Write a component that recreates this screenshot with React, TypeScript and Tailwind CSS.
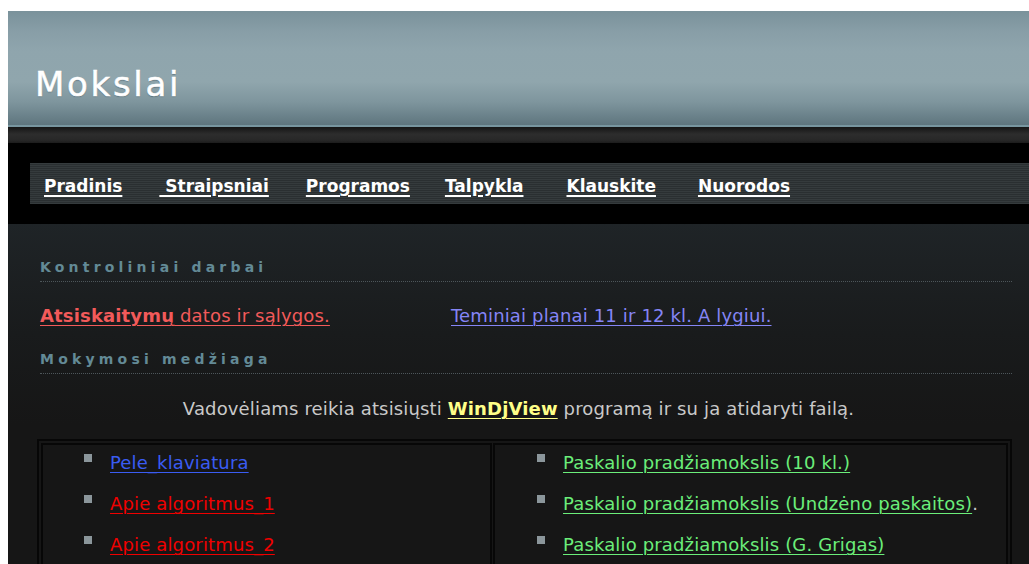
import React from "react";

const navItems = [
  { label: "Pradinis", space: "" },
  { label: " Straipsniai", space: "ml-[37px]" },
  { label: "Programos", space: "ml-[37px]" },
  { label: "Talpykla", space: "ml-[35px]" },
  { label: "Klauskite", space: "ml-[43px]" },
  { label: "Nuorodos", space: "ml-[42px]" },
];

function Bullet() {
  return <span className="mt-[2px] mr-[18px] h-[8px] w-[8px] shrink-0 bg-[#8b969b]" />;
}

function SectionTitle({ children }: { children: React.ReactNode }) {
  return (
    <h2 className="border-b border-dotted border-[#4d565a] pb-[5px] text-[14px] font-bold leading-[18px] tracking-[4.2px] text-[#638a96]">
      {children}
    </h2>
  );
}

const link = "underline decoration-1 underline-offset-[3px]";

export default function App() {
  return (
    <div
      className="min-h-screen bg-white pl-2 pt-[11px]"
      style={{ fontFamily: '"DejaVu Sans", Verdana, sans-serif' }}
    >
      {/* site banner */}
      <header className="flex h-[114px] items-end bg-[linear-gradient(to_bottom,#7a929b_0%,#889ea7_18%,#8fa5ad_35%,#90a6ad_62%,#7e959d_80%,#5e757e_100%)] pb-[20px] pl-[27px]">
        <h1 className="text-[34px] leading-[42px] tracking-[2.7px] text-white [-webkit-text-stroke:0.5px_#ffffff] [text-shadow:0_1px_1px_rgba(40,60,70,0.45)]">
          Mokslai
        </h1>
      </header>
      <div className="h-[2px] bg-[#7896a0]" />
      <div className="h-[16px] bg-[linear-gradient(to_bottom,#151515,#2d2d2d_45%,#282828_80%,#1c1c1c)]" />

      {/* navigation strip */}
      <div className="bg-black py-[20px] pl-[22px]">
        <nav className="flex h-[41px] items-center bg-[repeating-linear-gradient(to_bottom,#353b3d_0px,#353b3d_1px,#2a2f31_1px,#2a2f31_2px)] pl-[14px] pt-[5px]">
          {navItems.map((item) => (
            <a
              key={item.label}
              href="#"
              className={`${item.space} whitespace-pre text-[17px] font-bold leading-[22px] text-white underline decoration-[2px] underline-offset-[3px]`}
            >
              {item.label}
            </a>
          ))}
        </nav>
      </div>

      {/* page body */}
      <main className="min-h-[400px] bg-[linear-gradient(to_bottom,#1f2427_0px,#191b1c_110px,#161616_200px)] pb-10 pl-8 pr-[17px] pt-[34px] text-[18px] tracking-[0.15px] text-[#c9c9c9]">
        <SectionTitle>Kontroliniai darbai</SectionTitle>

        <div className="mt-[23px] grid grid-cols-[411px_1fr] leading-[22px]">
          <a href="#" className={`justify-self-start text-[#f25a5a] ${link}`}>
            <b>Atsiskaitymų</b> datos ir sąlygos.
          </a>
          <a href="#" className={`justify-self-start text-[#8585f5] ${link}`}>
            Teminiai planai 11 ir 12 kl. A lygiui.
          </a>
        </div>

        <div className="mt-[23px]">
          <SectionTitle>Mokymosi medžiaga</SectionTitle>
        </div>

        <p className="-ml-8 -mr-[17px] mt-[24px] text-center leading-[22px]">
          Vadovėliams reikia atsisiųsti{" "}
          <a href="#" className={`font-bold text-[#ffff88] ${link}`}>
            WinDjView
          </a>{" "}
          programą ir su ja atidaryti failą.
        </p>

        <div className="-ml-[3px] mt-[19px] border-2 border-[#070707] p-[2px]">
          <div className="grid grid-cols-[451px_1fr] gap-[1px]">
            <ul className="flex flex-col gap-[19px] border-2 border-[#070707] pb-4 pl-[41px] pt-[7px] leading-[22px]">
              <li className="flex items-start">
                <Bullet />
                <a href="#" className={`text-[#3a5cf2] ${link}`}>Pele_klaviatura</a>
              </li>
              <li className="flex items-start">
                <Bullet />
                <a href="#" className={`text-[#f00000] ${link}`}>Apie algoritmus_1</a>
              </li>
              <li className="flex items-start">
                <Bullet />
                <a href="#" className={`text-[#f00000] ${link}`}>Apie algoritmus_2</a>
              </li>
            </ul>
            <ul className="flex flex-col gap-[19px] border-2 border-[#070707] pb-4 pl-[42px] pt-[7px] leading-[22px]">
              <li className="flex items-start">
                <Bullet />
                <a href="#" className={`text-[#6bee7a] ${link}`}>Paskalio pradžiamokslis (10 kl.)</a>
              </li>
              <li className="flex items-start">
                <Bullet />
                <span>
                  <a href="#" className={`text-[#6bee7a] ${link}`}>
                    Paskalio pradžiamokslis (Undzėno paskaitos)
                  </a>
                  .
                </span>
              </li>
              <li className="flex items-start">
                <Bullet />
                <a href="#" className={`text-[#6bee7a] ${link}`}>Paskalio pradžiamokslis (G. Grigas)</a>
              </li>
            </ul>
          </div>
        </div>
      </main>
    </div>
  );
}
